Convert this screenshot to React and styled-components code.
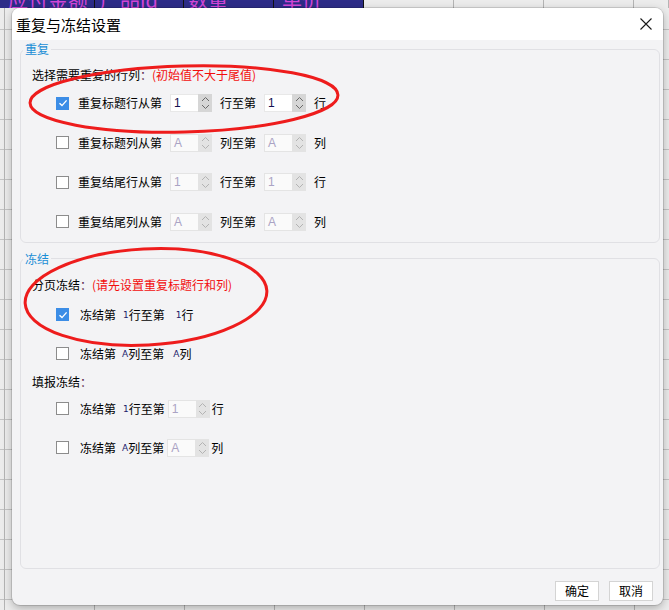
import React from 'react';
import styled, { createGlobalStyle } from 'styled-components';

const GlobalStyle = createGlobalStyle`
  html, body { margin: 0; padding: 0; }
  body { font-family: "Noto Sans CJK SC", "Microsoft YaHei", sans-serif; }
`;

const Screen = styled.div`
  position: relative;
  width: 669px;
  height: 610px;
  overflow: hidden;
  display: flex;
  flex-direction: column;
  background-color: #ececec;
  background-image:
    repeating-linear-gradient(to right, transparent 0 4px, #b4b4b4 4px 5px, transparent 5px 90px),
    repeating-linear-gradient(to bottom, transparent 0 29px, #c4c4c4 29px 30px);
`;

const HeaderRow = styled.div`
  display: flex;
  height: 8px;
  flex: none;
`;

const HeaderCell = styled.div`
  width: ${p => p.$w}px;
  flex: none;
  box-sizing: border-box;
  height: 8px;
  overflow: hidden;
  display: flex;
  align-items: flex-end;
  padding-left: ${p => p.$pad || 0}px;
  background: ${p => (p.$dark ? '#2d2c88' : '#ececec')};
  border-right: 1px solid ${p => (p.$dark ? '#111' : '#b4b4b4')};
`;

const HeaderText = styled.span`
  font-size: 20px;
  line-height: 20px;
  margin-bottom: -2px;
  color: #d246d8;
  white-space: nowrap;
`;

const DialogArea = styled.div`
  flex: 1;
  display: flex;
  padding: 0 6px 5px 12px;
`;

const Dialog = styled.div`
  position: relative;
  flex: 1;
  display: flex;
  flex-direction: column;
  border-radius: 8px;
  background: #f3f3f5;
  box-shadow: 0 0 0 1px rgba(0, 0, 0, 0.12), 0 3px 10px rgba(0, 0, 0, 0.28);
  overflow: hidden;
`;

const TitleBar = styled.div`
  height: 32px;
  flex: none;
  background: #ffffff;
  display: flex;
  align-items: center;
  justify-content: space-between;
  padding: 0 11px 0 4px;
`;

const Title = styled.span`
  font-size: 15px;
  color: #000;
`;

const CloseButton = styled.button`
  width: 12px;
  height: 12px;
  padding: 0;
  border: none;
  background: transparent;
  display: flex;
`;

const Body = styled.div`
  flex: 1;
  display: flex;
  flex-direction: column;
  padding: 1px 3px 0 8px;
`;

const Group = styled.fieldset`
  margin: ${p => p.$mt || 0}px 0 0 0;
  padding: 0 0 ${p => p.$pb || 0}px 0;
  border: 1px solid #e0e0e4;
  border-radius: 6px;
  min-width: 0;
  flex: ${p => (p.$grow ? 1 : 'none')};
`;

const Legend = styled.legend`
  margin-left: 2px;
  padding: 0 2px;
  font-size: 12px;
  line-height: 16px;
  color: #1a8ed6;
`;

const GroupContent = styled.div`
  display: flex;
  flex-direction: column;
  padding-left: 11px;
`;

const Hint = styled.div`
  margin-top: ${p => p.$mt}px;
  height: 20px;
  line-height: 20px;
  font-size: 12px;
  color: #000;
  white-space: nowrap;
`;

const Colon = styled.span`
  color: #5a1f4a;
`;

const Warn = styled.span`
  color: #f20d0d;
`;

const Row = styled.div`
  margin-top: ${p => p.$mt}px;
  height: 20px;
  display: flex;
  align-items: center;
  padding-left: 24px;
  gap: ${p => p.$gap || 0}px;
  font-size: 12px;
  color: #000;
  white-space: nowrap;
`;

const Box = styled.span`
  width: 13px;
  height: 13px;
  box-sizing: border-box;
  flex: none;
  display: flex;
  align-items: center;
  justify-content: center;
  background: ${p => (p.$on ? '#3c8de6' : '#ffffff')};
  border: ${p => (p.$on ? 'none' : '1px solid #8c8c8c')};
  margin-right: ${p => p.$mr}px;
`;

const Text = styled.span`
  line-height: 20px;
  margin-left: ${p => p.$ml || 0}px;
`;

const Mini = styled.span`
  font-family: "DejaVu Sans", sans-serif;
  font-size: 9px;
  line-height: 20px;
  color: #20206a;
  margin-left: ${p => p.$ml || 0}px;
  margin-right: ${p => p.$mr || 0}px;
`;

const Spin = styled.span`
  display: flex;
  width: 42px;
  height: 18px;
  flex: none;
  margin-left: ${p => p.$ml || 0}px;
  margin-right: ${p => p.$mr || 0}px;
`;

const SpinInput = styled.span`
  flex: 1;
  box-sizing: border-box;
  background: ${p => (p.$off ? '#fafafa' : '#ffffff')};
  border: 1px solid ${p => (p.$off ? '#e4e4e4' : '#e8e8e8')};
  border-right: none;
  font-family: "Liberation Sans", Arial, sans-serif;
  font-size: 12px;
  line-height: 16px;
  padding-left: 3px;
  color: ${p => (p.$off ? '#aaa3c4' : '#141050')};
`;

const SpinButtons = styled.span`
  width: 14px;
  flex: none;
  background: ${p => (p.$off ? '#e3e3e3' : '#d6d6d6')};
  display: flex;
  align-items: center;
  justify-content: center;
`;

const Footer = styled.div`
  display: flex;
  justify-content: flex-end;
  gap: 10px;
  padding: 12px 7px 4px 0;
`;

const Button = styled.button`
  width: 44px;
  height: 20px;
  box-sizing: border-box;
  padding: 0;
  background: #ffffff;
  border: 1px solid #d4d4d4;
  font-family: "Noto Sans CJK SC", sans-serif;
  font-size: 12px;
  line-height: 18px;
  color: #000;
`;

const Annotations = styled.svg`
  position: absolute;
  left: 0;
  top: 0;
  pointer-events: none;
`;

const Check = () => (
  <svg width="10" height="10" viewBox="0 0 10 10">
    <path d="M1.5 5.2 L4 7.6 L8.6 2.4" fill="none" stroke="#fff" strokeWidth="1.4" />
  </svg>
);

const Chevrons = ({ off }) => (
  <svg width="9" height="14" viewBox="0 0 9 14">
    <path d="M1 5 L4.5 1.5 L8 5" fill="none" stroke={off ? '#b3b3b3' : '#6a6a6a'} strokeWidth="1" />
    <path d="M1 9 L4.5 12.5 L8 9" fill="none" stroke={off ? '#b3b3b3' : '#6a6a6a'} strokeWidth="1" />
  </svg>
);

const SpinBox = ({ value, off, ml, mr }) => (
  <Spin $ml={ml} $mr={mr}>
    <SpinInput $off={off}>{value}</SpinInput>
    <SpinButtons $off={off}>
      <Chevrons off={off} />
    </SpinButtons>
  </Spin>
);

const repeatRows = [
  { label: '重复标题行从第', unit: '行', mid: '行至第', v: '1', on: true, mt: 8 },
  { label: '重复标题列从第', unit: '列', mid: '列至第', v: 'A', on: false, mt: 19.5 },
  { label: '重复结尾行从第', unit: '行', mid: '行至第', v: '1', on: false, mt: 19.5 },
  { label: '重复结尾列从第', unit: '列', mid: '列至第', v: 'A', on: false, mt: 19.5 },
];

export default function App() {
  return (
    <>
      <GlobalStyle />
      <Screen>
        <HeaderRow>
          <HeaderCell $w={95} $pad={8} $dark><HeaderText>应付金额</HeaderText></HeaderCell>
          <HeaderCell $w={89} $pad={5} $dark><HeaderText>产品id</HeaderText></HeaderCell>
          <HeaderCell $w={90} $pad={4} $dark><HeaderText>数量</HeaderText></HeaderCell>
          <HeaderCell $w={90} $pad={8} $dark><HeaderText>单价</HeaderText></HeaderCell>
          <HeaderCell $w={90} />
          <HeaderCell $w={90} />
          <HeaderCell $w={90} />
          <HeaderCell $w={35} />
        </HeaderRow>
        <DialogArea>
          <Dialog>
            <TitleBar>
              <Title>重复与冻结设置</Title>
              <CloseButton aria-label="关闭">
                <svg width="12" height="12" viewBox="0 0 12 12">
                  <path d="M0.5 0.5 L11.5 11.5 M11.5 0.5 L0.5 11.5" stroke="#1a1a1a" strokeWidth="1.1" />
                </svg>
              </CloseButton>
            </TitleBar>
            <Body>
              <Group $pb={10}>
                <Legend>重复</Legend>
                <GroupContent>
                  <Hint $mt={8}>
                    选择需要重复的行列<Colon>：</Colon><Warn>(初始值不大于尾值)</Warn>
                  </Hint>
                  {repeatRows.map(r => (
                    <Row key={r.label} $mt={r.mt} $gap={8}>
                      <Box $on={r.on} $mr={1}>{r.on && <Check />}</Box>
                      <Text>{r.label}</Text>
                      <SpinBox value={r.v} off={!r.on} />
                      <Text>{r.mid}</Text>
                      <SpinBox value={r.v} off={!r.on} />
                      <Text>{r.unit}</Text>
                    </Row>
                  ))}
                </GroupContent>
              </Group>
              <Group $mt={8} $grow>
                <Legend>冻结</Legend>
                <GroupContent>
                  <Hint $mt={8}>
                    分页冻结<Colon>：</Colon><Warn>(请先设置重复标题行和列)</Warn>
                  </Hint>
                  <Row $mt={10}>
                    <Box $on $mr={11}><Check /></Box>
                    <Text>冻结第</Text>
                    <Mini $ml={7}>1</Mini>
                    <Text>行至第</Text>
                    <Mini $ml={11}>1</Mini>
                    <Text>行</Text>
                  </Row>
                  <Row $mt={19}>
                    <Box $mr={11} />
                    <Text>冻结第</Text>
                    <Mini $ml={6}>A</Mini>
                    <Text>列至第</Text>
                    <Mini $ml={9}>A</Mini>
                    <Text>列</Text>
                  </Row>
                  <Hint $mt={8}>
                    填报冻结<Colon>：</Colon>
                  </Hint>
                  <Row $mt={7}>
                    <Box $mr={11} />
                    <Text>冻结第</Text>
                    <Mini $ml={7}>1</Mini>
                    <Text>行至第</Text>
                    <SpinBox value="1" off ml={3} mr={2} />
                    <Text>行</Text>
                  </Row>
                  <Row $mt={19}>
                    <Box $mr={11} />
                    <Text>冻结第</Text>
                    <Mini $ml={6}>A</Mini>
                    <Text>列至第</Text>
                    <SpinBox value="A" off ml={3} mr={2} />
                    <Text>列</Text>
                  </Row>
                </GroupContent>
              </Group>
              <Footer>
                <Button>确定</Button>
                <Button>取消</Button>
              </Footer>
            </Body>
            <Annotations width="651" height="597" viewBox="0 0 651 597">
              <ellipse cx="172" cy="91" rx="154" ry="33" transform="rotate(-1.5 172 91)" fill="none" stroke="#ee1c1c" strokeWidth="3" />
              <ellipse cx="134" cy="289" rx="121" ry="48" transform="rotate(-3 134 289)" fill="none" stroke="#ee1c1c" strokeWidth="3" />
            </Annotations>
          </Dialog>
        </DialogArea>
      </Screen>
    </>
  );
}
